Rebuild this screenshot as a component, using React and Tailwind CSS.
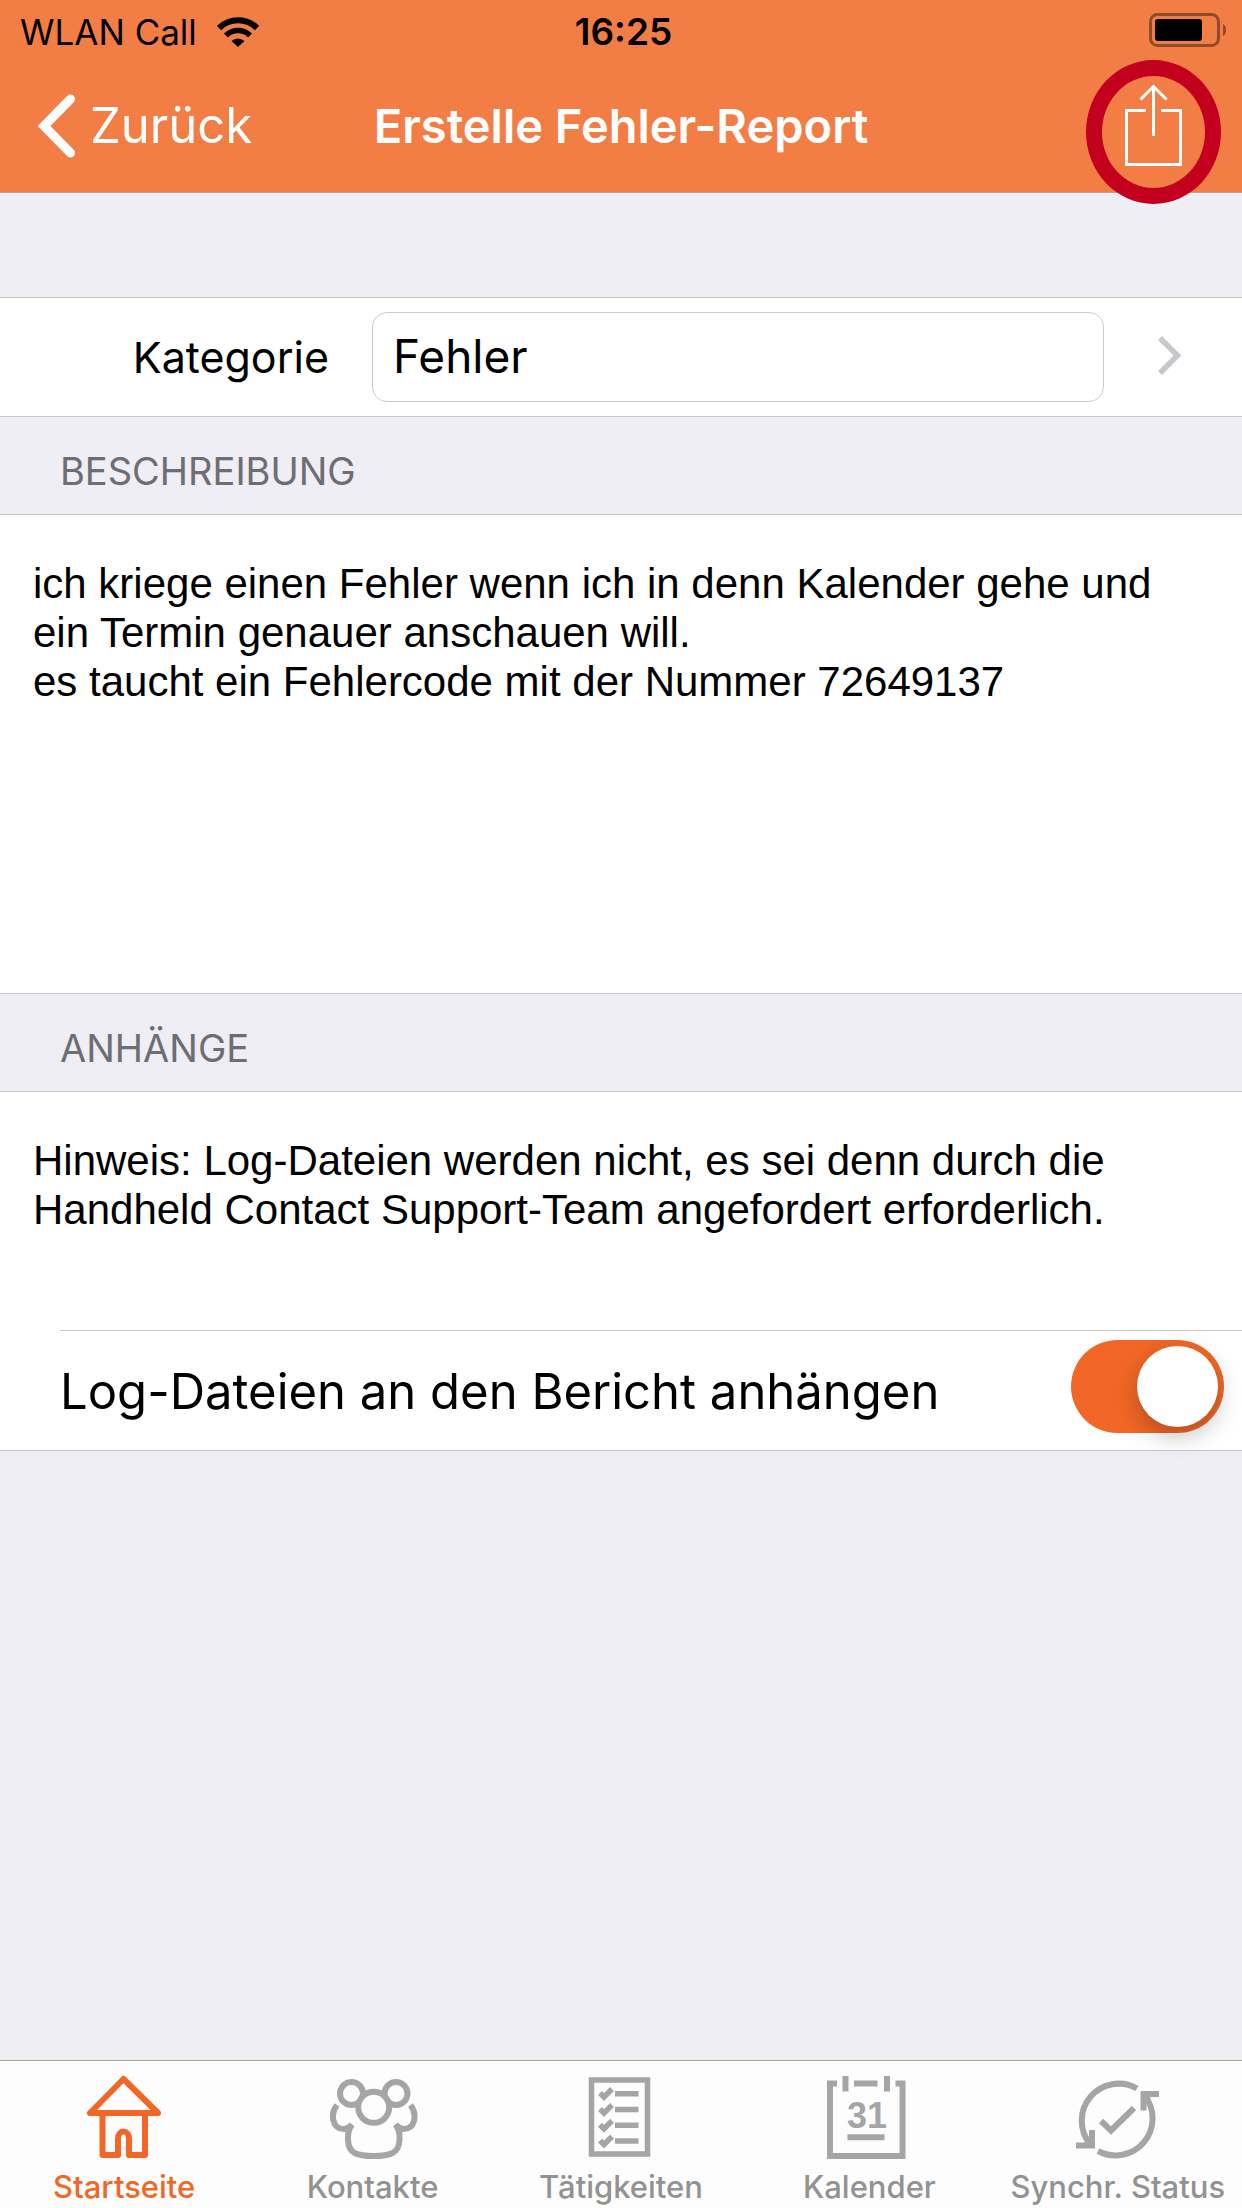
import { useState } from "react";

const HomeIcon = () => (
  <svg viewBox="0 0 90 90" className="h-[90px] w-[90px]" fill="none" stroke="currentColor" strokeWidth="6" strokeLinejoin="round">
    <path d="M44.5 7 L11 41 H79 Z" />
    <path d="M23.5 42 V83 H39 V67 C39 57 50 57 50 67 V83 H66 V42" />
  </svg>
);

const ContactsIcon = () => (
  <svg viewBox="0 0 90 90" className="h-[90px] w-[90px]" fill="none" stroke="currentColor" strokeWidth="6">
    <circle cx="23.5" cy="21.5" r="11.5" />
    <circle cx="68" cy="21.5" r="11.5" />
    <circle cx="45.7" cy="35.3" r="15.5" fill="#fdfdfd" />
    <path d="M9 33 C2 42 4 57 16 57 C19 57 21 56 24 52.5 C20 58 19.7 62 20 68 C20.5 82 30 84 45.7 84 C61 84 71 82 71.5 68 C71.7 62 71.5 58 67.5 52.5 C70.5 56 72.5 57 75.5 57 C87.5 57 89.5 42 82.5 33" />
  </svg>
);

const TasksIcon = () => (
  <svg viewBox="0 0 90 90" className="h-[90px] w-[90px]" fill="none" stroke="currentColor" strokeWidth="5.5">
    <rect x="15.5" y="8" width="56" height="74" />
    <path d="M39 21.7 H62.5 M39 37.5 H62.5 M39 53.3 H62.5 M39 69 H62.5" />
    <path d="M24 21 L28 25 L36 17 M24 37 L28 41 L36 33 M24 52.8 L28 56.8 L36 48.8 M24 68.5 L28 72.5 L36 64.5" />
  </svg>
);

const CalendarIcon = () => (
  <svg viewBox="0 0 90 90" className="h-[90px] w-[90px]" fill="none" stroke="currentColor" strokeWidth="6">
    <path d="M13 11.5 H6 V84 H78.5 V11.5 H71.5" />
    <path d="M21.5 4 V19.5 M63 4 V19.5 M30 11.5 H53.5 M23.5 65.3 H60.5" />
    <text
      x="43"
      y="56"
      textAnchor="middle"
      fill="currentColor"
      stroke="none"
      className="font-['Liberation_Sans',sans-serif] text-[36px] font-bold"
    >
      31
    </text>
  </svg>
);

const SyncIcon = () => (
  <svg viewBox="0 0 90 90" className="h-[90px] w-[90px]" fill="none" stroke="currentColor" strokeWidth="6">
    <path d="M17 72 A37 37 0 0 1 64 16.5" />
    <path d="M72 24 A37 37 0 0 1 25 79" />
    <path d="M28 49 L38 58.5 L61 36" />
    <path d="M86 22 H70.5 V38.5 M3 73.5 H19 V58" />
    <path d="M69 21 H82 L69 34 Z M20 74 H8 L20 62 Z" fill="currentColor" stroke="none" />
  </svg>
);

const tabs = [
  { label: "Startseite", Icon: HomeIcon, active: true },
  { label: "Kontakte", Icon: ContactsIcon },
  { label: "Tätigkeiten", Icon: TasksIcon },
  { label: "Kalender", Icon: CalendarIcon },
  { label: "Synchr. Status", Icon: SyncIcon },
];

const StatusBar = () => (
  <div className="grid h-[60px] grid-cols-[1fr_auto_1fr] items-center pl-5 pr-[15px] pt-1 text-[35px] leading-10 text-black">
    <div className="flex items-center gap-5">
      <span>WLAN Call</span>
      <svg viewBox="0 0 42 30" className="h-[30px] w-[42px]">
        <path d="M2 11 A27 27 0 0 1 40 11" fill="none" stroke="black" strokeWidth="6" />
        <path d="M9 18.5 A17 17 0 0 1 33 18.5" fill="none" stroke="black" strokeWidth="5.5" />
        <path d="M14.5 24 A9.5 9.5 0 0 1 27.5 24 L21 30 Z" fill="black" />
      </svg>
    </div>
    <span className="text-[37px] font-semibold">16:25</span>
    <svg viewBox="0 0 78 34" className="mb-1 h-[34px] w-[78px] justify-self-end">
      <rect x="1.5" y="1.5" width="68" height="31" rx="7" fill="none" stroke="#924b2a" strokeWidth="3" />
      <rect x="6" y="6" width="47" height="22" rx="3" fill="black" />
      <path d="M74 11 A5 6.5 0 0 1 74 23 Z" fill="#924b2a" />
    </svg>
  </div>
);

const NavBar = () => (
  <div className="grid h-[132px] grid-cols-[1fr_auto_1fr] items-center px-9 text-white">
    <button className="flex items-center gap-3.5 justify-self-start text-[49px] leading-[60px]">
      <svg viewBox="0 0 40 66" className="h-[66px] w-10" fill="none" stroke="currentColor" strokeWidth="9" strokeLinecap="round" strokeLinejoin="miter">
        <path d="M34.5 6 L8 33 L34.5 60" />
      </svg>
      <span>Zurück</span>
    </button>
    <h1 className="text-[47px] font-semibold leading-[60px]">Erstelle Fehler-Report</h1>
    <button aria-label="Teilen" className="relative mr-[21px] justify-self-end">
      <svg viewBox="0 0 63 84" className="h-[84px] w-[63px]" fill="none" stroke="currentColor" strokeWidth="3">
        <path d="M24 26.5 H4.5 V80.5 H58.5 V26.5 H39" />
        <path d="M31.5 52 V4 M18.5 15.5 L31.5 2.5 L44.5 15.5" />
      </svg>
      {/* highlight ring */}
      <span className="absolute -inset-x-9 -bottom-9 -top-6 rounded-[50%] border-[16px] border-[#c3001d]" />
    </button>
  </div>
);

const SectionTitle = ({ children }) => (
  <h2 className="border-y border-[#c8c7cc] px-[60px] pb-[19px] pt-[30px] text-[38px] leading-[48px] text-[#6d6d72]">
    {children}
  </h2>
);

const TabBar = () => (
  <nav className="grid grid-cols-5 border-t border-[#a7a6ab] bg-[#fdfdfd]">
    {tabs.map(({ label, Icon, active }) => (
      <a
        key={label}
        href="#"
        className={`flex flex-col items-center gap-1 whitespace-nowrap pt-[11px] text-[31px] font-medium leading-[42px] ${
          active ? "text-[#f26726]" : "text-[#929292]"
        }`}
      >
        <span className={active ? "" : "text-[#a5a5a5]"}>
          <Icon />
        </span>
        {label}
      </a>
    ))}
  </nav>
);

export default function App() {
  const [description, setDescription] = useState(
    "ich kriege einen Fehler wenn ich in denn Kalender gehe und ein Termin genauer anschauen will.\nes taucht ein Fehlercode mit der Nummer 72649137"
  );
  const [attachLogs, setAttachLogs] = useState(true);

  return (
    <div className="flex min-h-screen flex-col bg-[#efeef4] font-[Inter,sans-serif] text-black">
      <header className="border-b border-[#a7a6ab] bg-[#f27e45]">
        <StatusBar />
        <NavBar />
      </header>

      <main className="flex-1">
        {/* category */}
        <div className="mt-[104px] flex items-center border-t border-[#c8c7cc] bg-white py-[14px] pr-[57px]">
          <label htmlFor="category" className="w-[372px] pr-[43px] text-right text-[43px] leading-[60px]">
            Kategorie
          </label>
          <input
            id="category"
            type="text"
            defaultValue="Fehler"
            className="h-[90px] min-w-0 flex-1 rounded-[15px] border border-[#cdcdcd] px-5 pb-0.5 text-[46px] outline-none"
          />
          <button aria-label="Kategorie wählen" className="ml-[52px]">
            <svg viewBox="0 0 29 42" className="h-[42px] w-[29px]" fill="none" stroke="#c7c7cc" strokeWidth="5.5">
              <path d="M4 2 L21.5 19.5 L4 37" />
            </svg>
          </button>
        </div>

        <SectionTitle>BESCHREIBUNG</SectionTitle>
        <textarea
          aria-label="Beschreibung"
          value={description}
          onChange={(e) => setDescription(e.target.value)}
          className="block h-[478px] w-full resize-none bg-white px-[33px] pt-[44px] font-['Liberation_Sans',sans-serif] text-[42px] leading-[49px] outline-none"
        />

        <SectionTitle>ANHÄNGE</SectionTitle>
        <div className="border-b border-[#c8c7cc] bg-white">
          <p className="px-[33px] pb-24 pt-[44px] font-['Liberation_Sans',sans-serif] text-[42px] leading-[49px]">
            Hinweis: Log-Dateien werden nicht, es sei denn durch die Handheld Contact Support-Team angefordert erforderlich.
          </p>
          <div className="ml-[60px] flex h-[120px] items-center justify-between border-t border-[#c8c7cc] pr-[18px]">
            <label htmlFor="attach" className="pt-0.5 text-[49px] leading-[60px]">
              Log-Dateien an den Bericht anhängen
            </label>
            <input
              id="attach"
              type="checkbox"
              checked={attachLogs}
              onChange={(e) => setAttachLogs(e.target.checked)}
              className="mb-2 h-[93px] w-[153px] shrink-0 appearance-none rounded-full bg-gray-300 p-[6px] before:block before:h-[81px] before:w-[81px] before:rounded-full before:bg-white before:shadow-[0_9px_24px_rgba(0,0,0,0.25)] before:content-[''] checked:bg-[#f26726] checked:before:ml-[60px]"
            />
          </div>
        </div>
      </main>

      <TabBar />
    </div>
  );
}
